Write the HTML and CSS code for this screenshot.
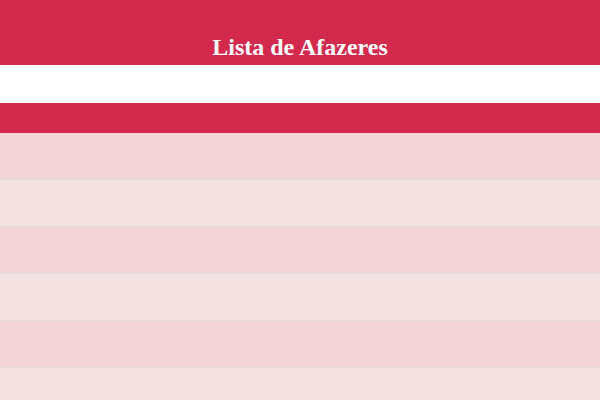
FILE: index.html
```html
<!DOCTYPE html>
<html lang="pt">
<head>
<meta charset="utf-8">
<title>Lista de Afazeres</title>
<link rel="stylesheet" href="styles.css">
</head>
<body>
<header class="header">
  <h1 class="title">Lista de Afazeres</h1>
</header>
<form class="form">
  <input class="input" type="text">
  <button class="add" type="button"></button>
</form>
<ul class="list">
  <li class="item"></li>
  <li class="item"></li>
  <li class="item"></li>
  <li class="item"></li>
  <li class="item"></li>
  <li class="item"></li>
</ul>
</body>
</html>
```

FILE: styles.css
```css
html, body {
  margin: 0;
  padding: 0;
  background: #ffffff;
  font-family: "Liberation Serif", "Times New Roman", serif;
}
.header {
  background: #d3294d;
  height: 65px;
  box-sizing: border-box;
  padding-top: 34px;
}
.title {
  margin: 0;
  color: #ffffff;
  font-size: 24px;
  font-weight: bold;
  text-align: center;
  line-height: 27px;
}
.form {
  display: flex;
  flex-direction: column;
  margin: 0;
}
.input {
  height: 38px;
  border: none;
  margin: 0;
  padding: 0;
  background: #ffffff;
  outline: none;
}
.add {
  height: 30px;
  border: none;
  margin: 0;
  padding: 0;
  background: #d3294d;
}
.list {
  list-style: none;
  margin: 0;
  padding: 0;
}
.item {
  height: 46px;
  border-bottom: 1px solid #dcdcdc;
}
.item:nth-child(odd) {
  background: #f4d4d7;
}
.item:nth-child(even) {
  background: #f4e1e1;
}
```
